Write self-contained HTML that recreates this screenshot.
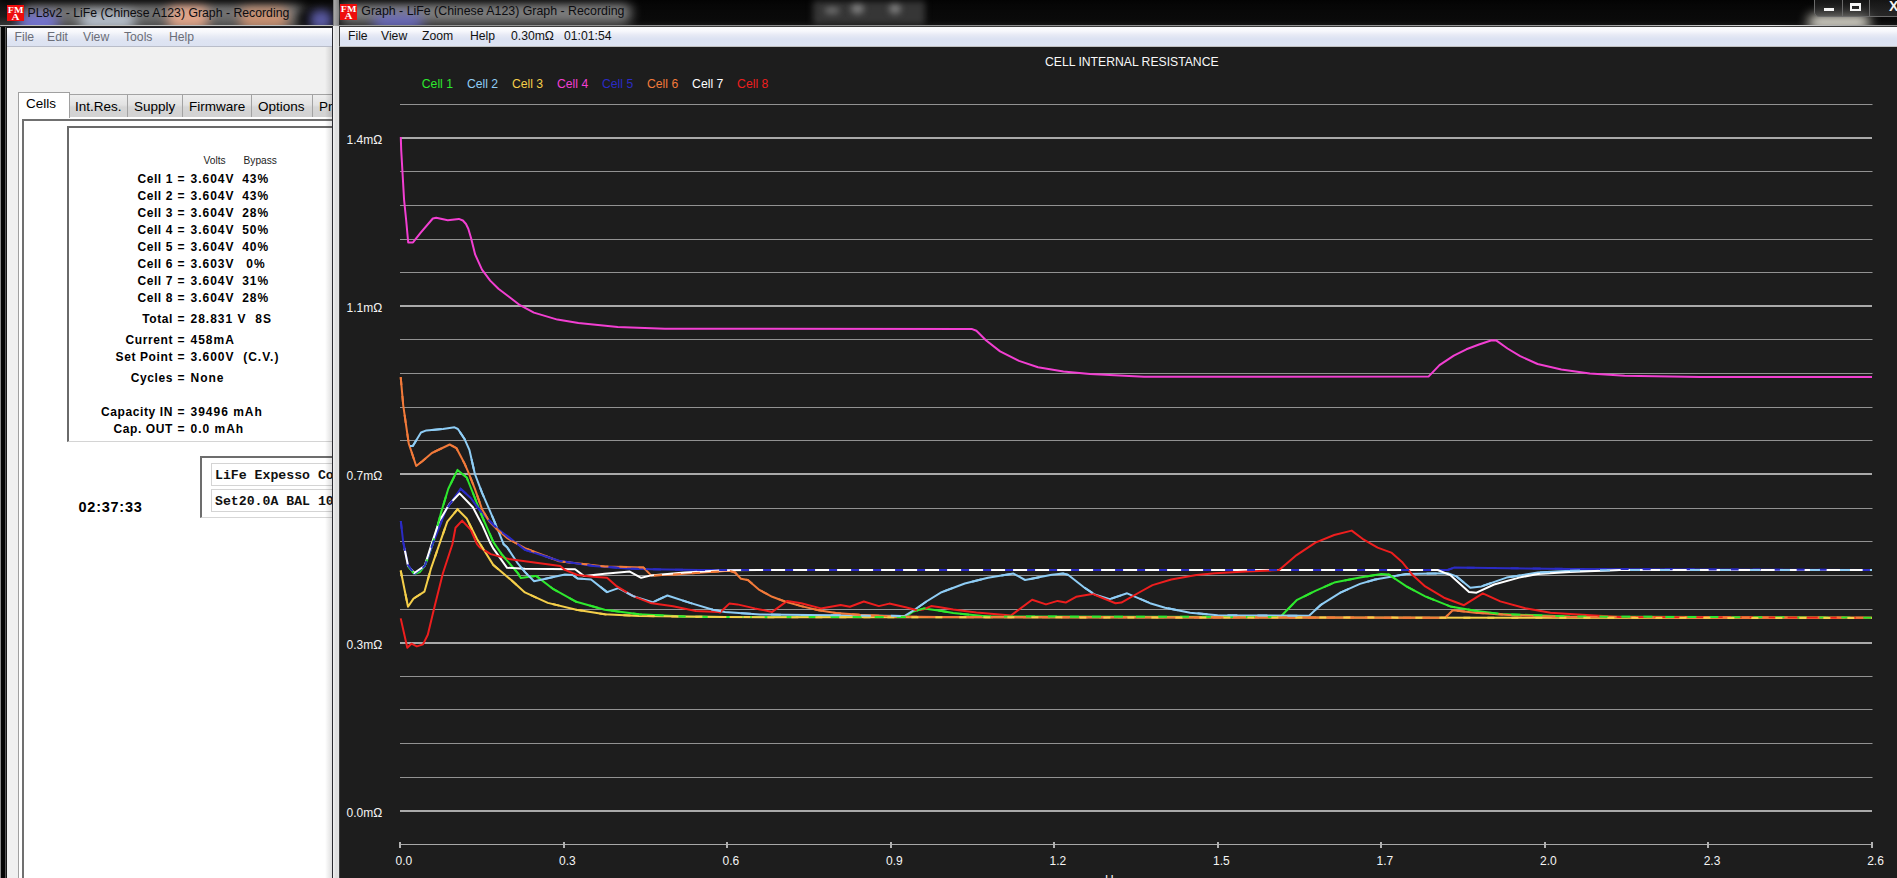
<!DOCTYPE html>
<html><head><meta charset="utf-8">
<style>
*{margin:0;padding:0;box-sizing:border-box}
html,body{width:1897px;height:878px;overflow:hidden;background:#000;font-family:"Liberation Sans",sans-serif}
.abs{position:absolute}
/* left window */
#lw{position:absolute;left:0;top:0;width:333px;height:878px;background:#141414;overflow:hidden}
#lt{position:absolute;left:0;top:0;width:333px;height:27px;overflow:hidden;background:linear-gradient(#101010,#1c1c1c 60%,#3a3a3a)}
.blob{position:absolute;border-radius:8px}
#lframe{position:absolute;left:0;top:27px;width:7px;height:851px;background:linear-gradient(90deg,#8a8a8a 0,#8a8a8a 1px,#050505 1px,#050505 5px,#555 5px,#555 6px,#1a1a1a 6px)}
#lmenu{position:absolute;left:7px;top:27px;width:325px;height:20px;border-top:1px solid #1c1c24;
 background:linear-gradient(#fcfcfe 0,#f6f7fb 4px,#e9ecf5 8px,#dfe4f2 12px,#dce2f1 18px);border-bottom:1px solid #b9bdc9}
#lmenu span{position:absolute;top:2px;font-size:12.2px;color:#6b6e78}
#lclient{position:absolute;left:7px;top:47px;width:325px;height:831px;background:#f0f0f0}
#lright{position:absolute;left:332px;top:27px;width:1px;height:851px;background:#2a2a30}
.tab{position:absolute;top:94px;height:23px;border:1px solid #a3a3a3;border-bottom:none;
 background:linear-gradient(#eeeeee,#e2e2e2 45%,#d6d6d6 55%,#d2d2d2);font-size:13.5px;color:#000}
.tab span{position:absolute;top:4px}
#tabsel{position:absolute;left:18px;top:92px;width:52px;height:26px;border:1px solid #a0a0a0;border-bottom:none;background:#fff;z-index:2}
#tabsel span{position:absolute;left:7px;top:3px;font-size:13.5px}
#page{position:absolute;left:18px;top:116px;width:320px;height:780px;border-left:1px solid #a0a0a0;border-top:1px solid #a0a0a0;background:#fff}
#inner{position:absolute;left:22px;top:119px;width:320px;height:770px;border-left:2px solid #707070;border-top:2px solid #707070;background:#fff}
#cells{position:absolute;left:67px;top:126px;width:280px;height:316px;border-left:2px solid #6a6a6a;border-top:2px solid #6a6a6a;border-bottom:1px solid #d4d4d4;background:#fff}
.row{position:absolute;font-size:12px;font-weight:bold;color:#000;white-space:pre;letter-spacing:.45px}
.lab{text-align:right;width:160px;left:13px;letter-spacing:.6px}
.eq{left:177.5px}
.val{left:190.5px;letter-spacing:1px}
.hdr{position:absolute;font-size:10.2px;color:#222;top:154.5px}
#timer{position:absolute;left:78.5px;top:498.5px;font-size:14.5px;font-weight:bold;letter-spacing:.75px}
#grp{position:absolute;left:200px;top:456px;width:140px;height:62px;border-left:2px solid #6d6d6d;border-top:2px solid #6d6d6d;border-bottom:1px solid #d6d6d6;background:#fff}
.tb{position:absolute;left:211px;width:130px;height:23px;border:1px solid #d4d4d4;background:#fff;font-family:"Liberation Mono",monospace;font-weight:bold;font-size:13.2px;white-space:pre;color:#111}
.tb span{position:absolute;left:3px;top:4px}
/* right window */
#rw{position:absolute;left:333px;top:0;width:1564px;height:878px;background:#0a0a0a}
#rt{position:absolute;left:0;top:0;width:1564px;height:26px;overflow:hidden;background:linear-gradient(#060606,#0a0a0a 80%,#151515)}
#rframe{position:absolute;left:0;top:26px;width:7px;height:852px;background:linear-gradient(90deg,#f2f2f2 0,#dcdcdc 3px,#e4e4e4 6px,#3c3c3c 6px)}
#rmenu{position:absolute;left:6px;top:26px;width:1558px;height:21px;border-top:1px solid #3a3a3a;border-left:1px solid #3a3a3a;
 background:linear-gradient(#fbfbfd 0,#f7f8fc 4px,#e7eaf5 8px,#dce2f2 12px,#dde3f2 18px);border-bottom:1px solid #c0c0c0}
#rmenu span{position:absolute;top:2px;font-size:12.2px;color:#111}
#graph{position:absolute;left:7px;top:47px;width:1557px;height:831px;background:#1d1d1d}
.graph{position:absolute;left:0;top:0}
.ttl{position:absolute;font-size:12.1px;color:#0c0c10;white-space:pre}
.ico2{position:absolute}
.ico{position:absolute;width:17px;height:15px;background:#e01212;color:#fff;font-family:"Liberation Serif",serif;font-weight:bold;font-size:7px;line-height:7px;text-align:center}
.btns{position:absolute;top:-2px;height:19px;border:1px solid #6a6a6a;border-radius:0 0 5px 5px;background:linear-gradient(rgba(30,30,30,.6),rgba(60,60,60,.6))}
</style></head><body>
<div id="lw">
 <div id="lt">
  <div class="blob" style="left:22px;top:2px;width:280px;height:22px;background:rgba(165,165,165,.65);filter:blur(6px)"></div>
  <div class="blob" style="left:18px;top:14px;width:40px;height:18px;background:rgba(120,120,230,.9);filter:blur(6px)"></div>
  <div class="blob" style="left:80px;top:12px;width:55px;height:18px;background:rgba(200,210,225,.85);filter:blur(6px)"></div>
  <div class="blob" style="left:168px;top:4px;width:40px;height:26px;background:rgba(235,170,140,.9);filter:blur(6px)"></div>
  <div class="blob" style="left:240px;top:6px;width:48px;height:24px;background:rgba(215,150,115,.85);filter:blur(6px)"></div>
  <div class="blob" style="left:298px;top:10px;width:40px;height:20px;background:rgba(0,0,0,.8);filter:blur(5px)"></div>
  <div class="blob" style="left:310px;top:10px;width:22px;height:20px;background:rgba(110,110,200,.8);filter:blur(5px)"></div>
  <div class="blob" style="left:0;top:-6px;width:340px;height:9px;background:rgba(0,0,0,.7);filter:blur(3px)"></div>
  <div class="blob" style="left:0;top:25px;width:333px;height:1px;background:#bdbdbd"></div>
  <div class="blob" style="left:0;top:26px;width:333px;height:1px;background:#222"></div>
 </div>
 <svg class="ico2" style="left:7px;top:5px" width="17" height="16" viewBox="0 0 17 16"><rect width="17" height="16" fill="#ee0d0d"/><text x="0.8" y="8.2" font-family="Liberation Serif,serif" font-weight="bold" font-size="8.6" fill="#fff" textLength="15.6" lengthAdjust="spacingAndGlyphs">FM</text><text x="4.6" y="15.2" font-family="Liberation Serif,serif" font-weight="bold" font-size="8.6" fill="#fff" textLength="8" lengthAdjust="spacingAndGlyphs">A</text></svg>
 <div class="ttl" style="left:27.5px;top:6px;font-size:12.27px">PL8v2 - LiFe (Chinese A123) Graph - Recording</div>
 <div id="lframe"></div>
 <div id="lmenu"><span style="left:7.5px">File</span><span style="left:40px">Edit</span><span style="left:76px">View</span><span style="left:117px">Tools</span><span style="left:162px">Help</span></div>
 <div id="lclient"></div>
 <div id="page"></div>
 <div id="inner"></div>
 <div class="tab" style="left:69px;width:59px"><span style="left:5px">Int.Res.</span></div>
 <div class="tab" style="left:127px;width:56px"><span style="left:6px">Supply</span></div>
 <div class="tab" style="left:182px;width:70px"><span style="left:6px">Firmware</span></div>
 <div class="tab" style="left:251px;width:62px"><span style="left:6px">Options</span></div>
 <div class="tab" style="left:312px;width:40px"><span style="left:6px">Pr</span></div>
 <div id="tabsel"><span>Cells</span></div>
 <div id="cells"></div>
 <div class="hdr" style="left:203.5px">Volts</div>
 <div class="hdr" style="left:243.5px">Bypass</div>
 <div class="row lab" style="top:172.0px">Cell 1</div>
 <div class="row eq" style="top:172.0px">=</div>
 <div class="row val" style="top:172.0px">3.604V</div>
 <div class="row" style="top:172.0px;left:242.2px;letter-spacing:1px">43%</div>
 <div class="row lab" style="top:189.0px">Cell 2</div>
 <div class="row eq" style="top:189.0px">=</div>
 <div class="row val" style="top:189.0px">3.604V</div>
 <div class="row" style="top:189.0px;left:242.2px;letter-spacing:1px">43%</div>
 <div class="row lab" style="top:206.0px">Cell 3</div>
 <div class="row eq" style="top:206.0px">=</div>
 <div class="row val" style="top:206.0px">3.604V</div>
 <div class="row" style="top:206.0px;left:242.2px;letter-spacing:1px">28%</div>
 <div class="row lab" style="top:223.0px">Cell 4</div>
 <div class="row eq" style="top:223.0px">=</div>
 <div class="row val" style="top:223.0px">3.604V</div>
 <div class="row" style="top:223.0px;left:242.2px;letter-spacing:1px">50%</div>
 <div class="row lab" style="top:240.0px">Cell 5</div>
 <div class="row eq" style="top:240.0px">=</div>
 <div class="row val" style="top:240.0px">3.604V</div>
 <div class="row" style="top:240.0px;left:242.2px;letter-spacing:1px">40%</div>
 <div class="row lab" style="top:257.0px">Cell 6</div>
 <div class="row eq" style="top:257.0px">=</div>
 <div class="row val" style="top:257.0px">3.603V</div>
 <div class="row" style="top:257.0px;left:246.3px;letter-spacing:1px">0%</div>
 <div class="row lab" style="top:274.0px">Cell 7</div>
 <div class="row eq" style="top:274.0px">=</div>
 <div class="row val" style="top:274.0px">3.604V</div>
 <div class="row" style="top:274.0px;left:242.2px;letter-spacing:1px">31%</div>
 <div class="row lab" style="top:291.0px">Cell 8</div>
 <div class="row eq" style="top:291.0px">=</div>
 <div class="row val" style="top:291.0px">3.604V</div>
 <div class="row" style="top:291.0px;left:242.2px;letter-spacing:1px">28%</div>
 <div class="row lab" style="top:311.8px">Total</div>
 <div class="row eq" style="top:311.8px">=</div>
 <div class="row val" style="top:311.8px">28.831 V  8S</div>
 <div class="row lab" style="top:332.5px">Current</div>
 <div class="row eq" style="top:332.5px">=</div>
 <div class="row val" style="top:332.5px">458mA</div>
 <div class="row lab" style="top:349.7px">Set Point</div>
 <div class="row eq" style="top:349.7px">=</div>
 <div class="row val" style="top:349.7px">3.600V  (C.V.)</div>
 <div class="row lab" style="top:371.0px">Cycles</div>
 <div class="row eq" style="top:371.0px">=</div>
 <div class="row val" style="top:371.0px">None</div>
 <div class="row lab" style="top:404.8px">Capacity IN</div>
 <div class="row eq" style="top:404.8px">=</div>
 <div class="row val" style="top:404.8px">39496 mAh</div>
 <div class="row lab" style="top:421.7px">Cap. OUT</div>
 <div class="row eq" style="top:421.7px">=</div>
 <div class="row val" style="top:421.7px">0.0 mAh</div>
 <div id="timer">02:37:33</div>
 <div id="grp"></div>
 <div class="tb" style="top:463px"><span>LiFe Expesso Co</span></div>
 <div class="tb" style="top:489px"><span>Set20.0A BAL 10</span></div>
 <div class="abs" style="left:325px;top:47px;width:7px;height:831px;background:linear-gradient(90deg,rgba(0,0,0,0),rgba(0,0,0,.13))"></div>
 <div id="lright"></div>
</div>
<div id="rw">
 <div id="rt">
  <div class="blob" style="left:6px;top:2px;width:292px;height:22px;background:rgba(165,165,165,.75);filter:blur(6px)"></div>
  <div class="blob" style="left:40px;top:14px;width:50px;height:16px;background:rgba(110,110,220,.75);filter:blur(6px)"></div>
  <div class="blob" style="left:480px;top:-2px;width:112px;height:27px;background:#363636;filter:blur(3px);border-radius:3px"></div>
  <div class="blob" style="left:492px;top:7px;width:14px;height:7px;background:#6e6e6e;filter:blur(3px)"></div>
  <div class="blob" style="left:518px;top:3px;width:13px;height:11px;background:#7a7a7a;filter:blur(3px)"></div>
  <div class="blob" style="left:556px;top:3px;width:12px;height:11px;background:#7a7a7a;filter:blur(3px)"></div>
  <div class="blob" style="left:1475px;top:15px;width:62px;height:14px;background:rgba(245,242,230,.95);filter:blur(6px)"></div>
  <div class="blob" style="left:0;top:-6px;width:1564px;height:8px;background:rgba(0,0,0,.6);filter:blur(3px)"></div>
  <div class="btns" style="left:1481px;width:90px"></div>
  <div class="blob" style="left:1509px;top:0;width:1px;height:16px;background:#6a6a6a;border-radius:0"></div>
  <div class="blob" style="left:1536px;top:0;width:1px;height:16px;background:#6a6a6a;border-radius:0"></div>
  <div class="blob" style="left:1491px;top:8px;width:10px;height:3px;background:#f4f4f4;border-radius:0"></div>
  <div class="blob" style="left:1517px;top:3px;width:11px;height:8px;border:2px solid #f4f4f4;border-top-width:3px;border-radius:0"></div>
  <div class="blob" style="left:1556px;top:-2px;font:bold 14px 'Liberation Sans',sans-serif;color:#f4f4f4;border-radius:0">X</div>
  <div class="blob" style="left:0;top:25px;width:1564px;height:1px;background:linear-gradient(90deg,#9a9a9a,#8a8a8a 30%,#999 80%,#ddd 92%,#888);border-radius:0"></div>
 </div>
 <svg class="ico2" style="left:7px;top:4px" width="17" height="16" viewBox="0 0 17 16"><rect width="17" height="16" fill="#ee0d0d"/><text x="0.8" y="8.2" font-family="Liberation Serif,serif" font-weight="bold" font-size="8.6" fill="#fff" textLength="15.6" lengthAdjust="spacingAndGlyphs">FM</text><text x="4.6" y="15.2" font-family="Liberation Serif,serif" font-weight="bold" font-size="8.6" fill="#fff" textLength="8" lengthAdjust="spacingAndGlyphs">A</text></svg>
 <div class="ttl" style="left:28.3px;top:4px;font-size:12.37px">Graph - LiFe (Chinese A123) Graph - Recording</div>
 <div id="rframe"></div>
 <div class="abs" style="left:0;top:0;width:6px;height:26px;background:linear-gradient(90deg,#5a5a5a 0,#b8b8b8 1px,#a8a8a8 3px,#8a8a8a 6px);opacity:.9"></div>
 <div id="rmenu"><span style="left:8px">File</span><span style="left:41px">View</span><span style="left:82px">Zoom</span><span style="left:130px">Help</span><span style="left:171px">0.30mΩ</span><span style="left:224px">01:01:54</span></div>
 <div id="graph"><svg class="graph" width="1557" height="831" viewBox="340 47 1557 831">
<g><rect x="400" y="104" width="1472.5" height="1" fill="#929292"/><rect x="400" y="171" width="1472.5" height="1" fill="#929292"/><rect x="400" y="205" width="1472.5" height="1" fill="#929292"/><rect x="400" y="239" width="1472.5" height="1" fill="#929292"/><rect x="400" y="272" width="1472.5" height="1" fill="#929292"/><rect x="400" y="339" width="1472.5" height="1" fill="#929292"/><rect x="400" y="373" width="1472.5" height="1" fill="#929292"/><rect x="400" y="407" width="1472.5" height="1" fill="#929292"/><rect x="400" y="440" width="1472.5" height="1" fill="#929292"/><rect x="400" y="508" width="1472.5" height="1" fill="#929292"/><rect x="400" y="541" width="1472.5" height="1" fill="#929292"/><rect x="400" y="575" width="1472.5" height="1" fill="#929292"/><rect x="400" y="609" width="1472.5" height="1" fill="#929292"/><rect x="400" y="676" width="1472.5" height="1" fill="#929292"/><rect x="400" y="709" width="1472.5" height="1" fill="#929292"/><rect x="400" y="743" width="1472.5" height="1" fill="#929292"/><rect x="400" y="777" width="1472.5" height="1" fill="#929292"/><rect x="400" y="137" width="1472" height="2" fill="#aaaaaa"/><rect x="400" y="305" width="1472" height="2" fill="#aaaaaa"/><rect x="400" y="473" width="1472" height="2" fill="#aaaaaa"/><rect x="400" y="642" width="1472" height="2" fill="#aaaaaa"/><rect x="400" y="810" width="1472" height="2" fill="#aaaaaa"/></g>
<g><rect x="400" y="844" width="1472" height="1" fill="#a8a8a8"/><rect x="399" y="842" width="2" height="6" fill="#b0b0b0"/><rect x="563" y="842" width="2" height="6" fill="#b0b0b0"/><rect x="726" y="842" width="2" height="6" fill="#b0b0b0"/><rect x="890" y="842" width="2" height="6" fill="#b0b0b0"/><rect x="1053" y="842" width="2" height="6" fill="#b0b0b0"/><rect x="1217" y="842" width="2" height="6" fill="#b0b0b0"/><rect x="1380" y="842" width="2" height="6" fill="#b0b0b0"/><rect x="1544" y="842" width="2" height="6" fill="#b0b0b0"/><rect x="1707" y="842" width="2" height="6" fill="#b0b0b0"/><rect x="1871" y="842" width="2" height="6" fill="#b0b0b0"/></g>
<g font-family="Liberation Sans, sans-serif" font-size="12" fill="#f4f4f4"><text x="346.5" y="143.5">1.4mΩ</text><text x="346.5" y="311.5">1.1mΩ</text><text x="346.5" y="479.5">0.7mΩ</text><text x="346.5" y="648.5">0.3mΩ</text><text x="346.5" y="816.5">0.0mΩ</text><text x="395.5" y="865">0.0</text><text x="559.0" y="865">0.3</text><text x="722.5" y="865">0.6</text><text x="886.1" y="865">0.9</text><text x="1049.6" y="865">1.2</text><text x="1213.1" y="865">1.5</text><text x="1376.6" y="865">1.7</text><text x="1540.1" y="865">2.0</text><text x="1703.7" y="865">2.3</text><text x="1867.2" y="865">2.6</text></g>
<text x="1045" y="66" font-family="Liberation Sans, sans-serif" font-size="12.2" fill="#f8f8f8">CELL INTERNAL RESISTANCE</text>
<g font-family="Liberation Sans, sans-serif" font-size="12.2"><text x="421.8" y="88" fill="#2ee82e">Cell 1</text><text x="466.9" y="88" fill="#8fcdf5">Cell 2</text><text x="511.9" y="88" fill="#f5cf4a">Cell 3</text><text x="557.0" y="88" fill="#f23fd2">Cell 4</text><text x="602.0" y="88" fill="#2b2bc4">Cell 5</text><text x="647.0" y="88" fill="#f27a3a">Cell 6</text><text x="692.1" y="88" fill="#ffffff">Cell 7</text><text x="737.1" y="88" fill="#ee1e1e">Cell 8</text></g>
<polyline fill="none" stroke="#f23fd2" stroke-width="2" stroke-linejoin="round" points="400.8,137 401.2,150 404.1,200 406.2,220.5 408.2,242.4 413,242.4 420.5,232.8 432.8,218.5 436.2,217.8 447.8,220.2 458.8,218.9 462.9,220.5 466,224 468.3,228.7 471.1,238.3 475.2,254.7 482,269.7 490.2,280.6 498.4,288.8 509.3,297 520,305.2 533.9,312.6 557.4,319.6 578.4,323 617.7,327 664.9,328.8 971.6,328.9 976.4,330.8 985.9,340.3 1000.1,351.4 1019,360.9 1038,367.2 1063.4,371.5 1090,374 1144,376.7 1428.5,376.6 1439.5,365.1 1453.8,355.6 1466.4,349.3 1479,344.5 1491.7,340.2 1496.5,340.6 1507.5,348.5 1520.2,356.1 1537.6,364 1561.3,369.5 1589.8,373.5 1624.6,375.7 1700,377 1872,377"/>
<polyline fill="none" stroke="#2ee82e" stroke-width="2" stroke-linejoin="round" points="408,566 414.3,574 420,572 424.7,566 428.7,556 432.7,544 441.1,512.4 448.3,488.8 457.5,469.9 466.7,477.5 474.9,498 482.1,516.5 493.4,542.1 501.6,554.1 518,573.3 520.8,578.1 535,576 536.4,576.1 553.5,589.2 576.3,601.8 604.7,609.7 638.9,614.3 684.5,616.6 725,617.1 905.5,617 912.5,611.9 924.1,608.4 940,610.7 953.2,613.1 988,616.5 1280.3,617 1296.6,600.2 1315.4,590.8 1334.2,582.6 1360,577.6 1381.3,573.9 1388.8,574.5 1406.4,586.4 1425.2,596.4 1450.2,606.4 1475.3,610.8 1500.3,614 1570,616.5 1872,617.7"/>
<polyline fill="none" stroke="#8fcdf5" stroke-width="2" stroke-linejoin="round" points="410,446.1 412.8,446.1 421,432.5 426.4,430.4 442.9,429 454.5,427.3 457.9,429 464.7,439.3 469.5,450.2 474.9,474 482.1,492.9 489.3,509.3 497.5,528.8 503.6,544.2 507.1,547.3 518,563.7 525,572.1 534.1,581.3 564.9,574.4 572.8,575 577.4,578.4 591.1,579.5 607,592.1 618.4,588.1 633.2,596.1 652.6,602.3 667.4,595.5 690.1,602.9 712.9,609.7 725,612 760,614.5 904.4,616 914.8,609.6 926.4,601.5 941.6,592.2 964.8,583.5 988,577.7 1013.5,573.6 1025.1,580 1040.2,577.1 1051.8,574.8 1063.4,573.6 1068,574.8 1084.2,587.5 1094.7,594.5 1109.8,599.1 1127.1,593.3 1150,603.2 1165.1,607.7 1190.1,612.7 1217.7,615.2 1309.1,615.8 1320.4,605.2 1340.4,592.7 1360,583.9 1375.1,579.5 1406.4,573.9 1447.7,573.2 1456.5,576.4 1470.3,587.7 1481.5,586.4 1506.6,577.6 1537.9,572.6 1570,570.7 1620,570 1872,570"/>
<polyline fill="none" stroke="#f5cf4a" stroke-width="2" stroke-linejoin="round" points="400.7,570.5 408,606.8 413.5,598.6 424.4,591.7 431.2,567.8 440.1,542.1 447.3,521.6 457.5,509.3 466.7,518.5 477,539 483.9,550 493.4,565.1 511.2,580.1 524.9,592.4 547.8,602.9 576.3,609.7 604.7,614.3 638.9,616 725,617.1 1872,618"/>
<polyline fill="none" stroke="#f27a3a" stroke-width="2" stroke-linejoin="round" points="400.7,377.1 403.2,405.1 408.7,443.4 416.2,466 422.3,461.2 431.9,453 449.7,444.5 456.5,448.2 460.6,456 464.7,463.9 468.8,473.4 474.9,488.8 482.1,509.3 489.3,521.6 497.5,529.8 507.7,538.5 511.2,540.5 525,548.2 559.2,561.3 604.7,566.4 643.5,567.6 651.4,575.6 673.1,574.4 725,571 729.3,570.7 735.1,572.5 740.9,578.8 747.8,580 759.4,589.9 772.2,596.8 784.9,601.5 801.2,606.1 818.6,610.2 836,613.1 859.2,614.8 894,616.5 940,617.1 1445.2,617.7 1452.7,610.2 1475.3,612.7 1512.9,615.2 1570,617 1872,617.7"/>
<polyline fill="none" stroke="#2b2bc4" stroke-width="2" stroke-linejoin="round" points="400.8,521 403.2,542 408,565 414.3,574 424.7,566 428.7,555.5 432.7,544 446.2,509.3 460.6,488.8 470.8,498 482.1,513.4 497.5,528.8 515,542 525,549.9 559.2,560.8 593.3,565.9 627.5,568.5 650.3,569.3 700,570 1447.7,570 1454,567.6 1570,568.9 1872,570"/>
<polyline fill="none" stroke="#ffffff" stroke-width="2" stroke-linejoin="round" points="404.5,548.5 408,565.8 414.3,573 424.7,565.8 431.9,543.1 439.1,521.6 449.3,504.2 459.6,493.4 472.9,507.3 482.1,524.7 490.3,543.1 493.4,548.7 507.1,567.8 525,568.7 575.1,569.3 584.2,576.1 604.7,573.8 629.8,571.6 641.2,577.8 650.3,575.6 684.5,572.5 725,570.2 760,570 1437.7,570 1450.2,575.1 1469,592 1476.5,592.7 1494.1,584.5 1519.1,577.6 1537.9,573.9 1570,572 1620,570 1872,570"/>
<polyline fill="none" stroke="#ee1e1e" stroke-width="2" stroke-linejoin="round" points="400.7,618.4 407.3,647.8 411.4,643.7 416.9,646.4 423,644.4 427.8,634.8 434.7,606.1 442.9,573.3 452.4,544.2 455.5,527.8 462.1,520.6 470.8,529.8 477,544.2 479.8,547.3 490.7,554.1 508.5,558.9 525,561.3 560.3,565.9 564.9,569.9 577.4,575 593.3,576.7 607,577.8 616.1,585.8 633.2,596.1 650.3,602.9 673.1,606.3 695.8,610.9 718.6,612 720,612.5 729.3,603.6 737.4,604.4 754.8,608.4 772.2,611.9 787.3,600.9 801.2,603.2 820.9,608.4 840.6,604.9 849.9,606.7 863.8,601.5 878.9,606.1 889.3,603.6 905.6,607.3 917.1,610.2 922.9,609.6 931.1,606.1 940,607.3 953.2,609.6 976.4,612.5 1011.2,615.4 1032.1,599.7 1046,604.4 1057.6,600.9 1065.7,602.6 1076.1,596.8 1092.4,593.9 1115.5,603.2 1121.4,602.6 1140,592 1152.5,585.1 1171.3,579.5 1196.4,575.1 1215.2,573.2 1246.5,571.4 1279.1,570.1 1296.6,555.1 1315.4,542.6 1334.2,535 1351.7,530.6 1362.5,538.8 1377.6,547.6 1391.3,552.6 1402.6,562.6 1412.6,575.1 1425.2,586.4 1444,597.7 1464,605.2 1482.8,593.3 1500.3,601.4 1525.4,608.3 1550.5,612.7 1570,614 1620,617 1872,617.7"/>
<polyline fill="none" stroke="#f27a3a" stroke-width="2" stroke-dasharray="8 11" points="400.7,377.1 403.2,405.1 408.7,443.4 416.2,466 422.3,461.2 431.9,453 449.7,444.5 456.5,448.2 460.6,456 464.7,463.9 468.8,473.4 474.9,488.8 482.1,509.3 489.3,521.6 497.5,529.8 507.7,538.5 511.2,540.5 525,548.2 559.2,561.3 604.7,566.4 643.5,567.6 651.4,575.6 673.1,574.4 725,571 729.3,570.7 735.1,572.5 740.9,578.8 747.8,580 759.4,589.9 772.2,596.8 784.9,601.5 801.2,606.1 818.6,610.2 836,613.1 859.2,614.8 894,616.5 940,617.1 1445.2,617.7 1452.7,610.2 1475.3,612.7 1512.9,615.2 1570,617 1872,617.7"/>
<polyline fill="none" stroke="#2ee82e" stroke-width="2" stroke-dasharray="9 13" points="408,566 414.3,574 420,572 424.7,566 428.7,556 432.7,544 441.1,512.4 448.3,488.8 457.5,469.9 466.7,477.5 474.9,498 482.1,516.5 493.4,542.1 501.6,554.1 518,573.3 520.8,578.1 535,576 536.4,576.1 553.5,589.2 576.3,601.8 604.7,609.7 638.9,614.3 684.5,616.6 725,617.1 905.5,617 912.5,611.9 924.1,608.4 940,610.7 953.2,613.1 988,616.5 1280.3,617 1296.6,600.2 1315.4,590.8 1334.2,582.6 1360,577.6 1381.3,573.9 1388.8,574.5 1406.4,586.4 1425.2,596.4 1450.2,606.4 1475.3,610.8 1500.3,614 1570,616.5 1872,617.7"/>
<polyline fill="none" stroke="#f5cf4a" stroke-width="2" stroke-dasharray="7 17" points="400.7,570.5 408,606.8 413.5,598.6 424.4,591.7 431.2,567.8 440.1,542.1 447.3,521.6 457.5,509.3 466.7,518.5 477,539 483.9,550 493.4,565.1 511.2,580.1 524.9,592.4 547.8,602.9 576.3,609.7 604.7,614.3 638.9,616 725,617.1 1872,618"/>
<polyline fill="none" stroke="#2b2bc4" stroke-width="2" stroke-dasharray="8 14" points="400.8,521 403.2,542 408,565 414.3,574 424.7,566 428.7,555.5 432.7,544 446.2,509.3 460.6,488.8 470.8,498 482.1,513.4 497.5,528.8 515,542 525,549.9 559.2,560.8 593.3,565.9 627.5,568.5 650.3,569.3 700,570 1447.7,570 1454,567.6 1570,568.9 1872,570"/>
<polyline fill="none" stroke="#8fcdf5" stroke-width="2" stroke-dasharray="10 20" points="410,446.1 412.8,446.1 421,432.5 426.4,430.4 442.9,429 454.5,427.3 457.9,429 464.7,439.3 469.5,450.2 474.9,474 482.1,492.9 489.3,509.3 497.5,528.8 503.6,544.2 507.1,547.3 518,563.7 525,572.1 534.1,581.3 564.9,574.4 572.8,575 577.4,578.4 591.1,579.5 607,592.1 618.4,588.1 633.2,596.1 652.6,602.3 667.4,595.5 690.1,602.9 712.9,609.7 725,612 760,614.5 904.4,616 914.8,609.6 926.4,601.5 941.6,592.2 964.8,583.5 988,577.7 1013.5,573.6 1025.1,580 1040.2,577.1 1051.8,574.8 1063.4,573.6 1068,574.8 1084.2,587.5 1094.7,594.5 1109.8,599.1 1127.1,593.3 1150,603.2 1165.1,607.7 1190.1,612.7 1217.7,615.2 1309.1,615.8 1320.4,605.2 1340.4,592.7 1360,583.9 1375.1,579.5 1406.4,573.9 1447.7,573.2 1456.5,576.4 1470.3,587.7 1481.5,586.4 1506.6,577.6 1537.9,572.6 1570,570.7 1620,570 1872,570"/>
<text x="1105" y="884" font-family="Liberation Sans, sans-serif" font-size="12" fill="#f4f4f4">H</text>
</svg></div>
</div>
</body></html>
